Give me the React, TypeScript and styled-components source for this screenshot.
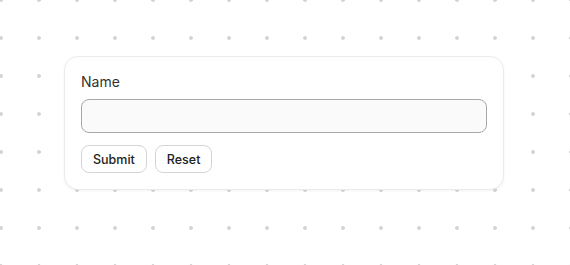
import styled, { createGlobalStyle } from "styled-components";

const GlobalStyle = createGlobalStyle`
  html, body {
    margin: 0;
    padding: 0;
  }
  body {
    font-family: Inter, "Liberation Sans", sans-serif;
    background-color: #ffffff;
    background-image: radial-gradient(circle, #d6d6d6 1.6px, transparent 2.2px);
    background-size: 38px 38px;
    background-position: -18px -19px;
    min-height: 265px;
  }
`;

const Page = styled.div`
  display: flex;
  justify-content: flex-start;
  padding: 56px 0 0 64px;
`;

const Card = styled.form`
  width: 440px;
  box-sizing: border-box;
  background: #ffffff;
  border: 1px solid #ebebeb;
  border-radius: 14px;
  box-shadow: 0 1px 3px rgba(0, 0, 0, 0.05);
  padding: 16px;
  display: flex;
  flex-direction: column;
`;

const Label = styled.label`
  font-size: 14px;
  line-height: 18px;
  color: #333333;
  margin-bottom: 8px;
`;

const Input = styled.input`
  box-sizing: border-box;
  height: 34px;
  width: 100%;
  border: 1px solid #a8a8a8;
  border-radius: 8px;
  background: #fafafa;
  padding: 0 10px;
  font-family: inherit;
  font-size: 14px;
  outline: none;
`;

const Actions = styled.div`
  display: flex;
  gap: 8px;
  margin-top: 12px;
`;

const Button = styled.button`
  height: 28px;
  padding: 0 11px;
  border: 1px solid #d4d4d4;
  border-radius: 8px;
  background: #ffffff;
  font-family: inherit;
  font-size: 12.5px;
  font-weight: 500;
  color: #222;
  cursor: pointer;
`;

export default function App() {
  return (
    <>
      <GlobalStyle />
      <Page>
        <Card onSubmit={(e) => e.preventDefault()}>
          <Label htmlFor="name">Name</Label>
          <Input id="name" type="text" />
          <Actions>
            <Button type="submit">Submit</Button>
            <Button type="reset">Reset</Button>
          </Actions>
        </Card>
      </Page>
    </>
  );
}
